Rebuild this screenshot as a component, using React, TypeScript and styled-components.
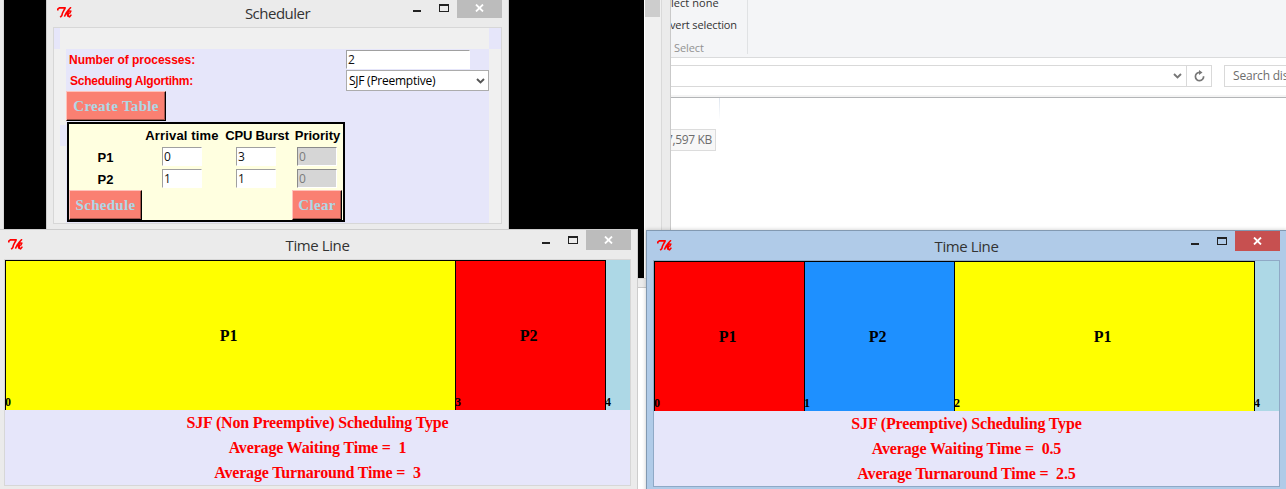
import React from "react";
import styled, { createGlobalStyle } from "styled-components";

const ui = `"Open Sans", "Noto Sans", sans-serif`;
const serif = `"Liberation Serif", "Times New Roman", serif`;
const sans = `"Liberation Sans", Arial, sans-serif`;

const GlobalStyle = createGlobalStyle`
  * { box-sizing: border-box; }
  body { margin: 0; background: #fff; overflow: hidden; }
`;

const Desktop = styled.div`
  position: relative;
  width: 1286px;
  height: 489px;
  overflow: hidden;
  background: #fff;
`;

/* ---------- Console window in the background ---------- */

const ConsoleWindow = styled.div`
  position: absolute;
  left: -4px;
  top: 0;
  width: 675px;
  height: 288px;
  display: flex;
  padding: 0 8px 8px 7px;
  background: #ebebeb;
  border: solid #c9c9c9;
  border-width: 0 1px 1px 0;
`;

const ConsoleBody = styled.div`
  flex: 1;
  display: flex;
  border: solid #d9d9d9;
  border-width: 0 1px 1px 1px;
`;

const ConsoleOutput = styled.div`
  flex: 1;
  background: #000;
`;

const ScrollTrack = styled.div`
  width: 17px;
  padding: 0 1px;
  background: #f0f0f0;
  border-left: 1px solid #fff;
`;

const ScrollThumb = styled.div`
  height: 17px;
  margin-left: -1px;
  background: #cdcdcd;
`;

/* ---------- File explorer in the background ---------- */

const Explorer = styled.div`
  position: absolute;
  left: 671px;
  top: 0;
  width: 615px;
  height: 230px;
  overflow: hidden;
  background: #fff;
  font-family: ${ui};
`;

const Ribbon = styled.div`
  height: 58px;
  background: #f4f5f7;
  border-bottom: 1px solid #dadbdc;
`;

const RibbonGroup = styled.div`
  width: 77px;
  height: 54px;
  overflow: hidden;
  border-right: 1px solid #e0e2e4;
`;

const RibbonItem = styled.div<{ $shift: number; $spacing: number }>`
  height: 22px;
  margin-left: ${(p) => p.$shift}px;
  font-size: 11px;
  line-height: 22px;
  letter-spacing: ${(p) => p.$spacing}px;
  white-space: nowrap;
  color: #333;
  &:first-child { margin-top: -8px; }
`;

const RibbonCaption = styled.div`
  margin: 1px 0 0 3px;
  font-size: 11px;
  line-height: 22px;
  letter-spacing: -0.1px;
  color: #929292;
`;

const AddressRow = styled.div`
  display: flex;
  height: 40px;
  padding-top: 7px;
  background: linear-gradient(#fff 37px, #f4f4f4 37px);
  border-bottom: 1px solid #b3b5b7;
`;

const AddressBox = styled.div`
  display: flex;
  align-items: center;
  justify-content: flex-end;
  width: 516px;
  height: 22px;
  padding-right: 4px;
  border: solid #d9d9d9;
  border-width: 1px 1px 1px 0;
`;

const RefreshBox = styled.div`
  display: flex;
  align-items: center;
  justify-content: center;
  width: 25px;
  height: 22px;
  border: solid #d9d9d9;
  border-width: 1px 1px 1px 0;
`;

const SearchBox = styled.div`
  flex: 1;
  height: 22px;
  margin-left: 12px;
  padding-left: 8px;
  overflow: hidden;
  border: solid #d9d9d9;
  border-width: 1px 0 1px 1px;
  color: #6d6d6d;
  font-size: 12px;
  line-height: 20px;
  letter-spacing: -0.2px;
  white-space: nowrap;
`;

const ColumnEdge = styled.div`
  width: 49px;
  height: 21px;
  border-right: 1px solid;
  border-image: linear-gradient(#dce4ee, #fff) 1;
`;

const SizeTip = styled.div`
  width: 45px;
  height: 22px;
  margin-top: 10px;
  overflow: hidden;
  display: flex;
  justify-content: flex-end;
  padding-right: 3px;
  background: #f7f7f7;
  border: solid #dcdcdc;
  border-width: 1px 1px 1px 0;
  color: #6d6d6d;
  font-size: 12px;
  line-height: 20px;
  letter-spacing: -0.35px;
  white-space: nowrap;
`;

/* ---------- Application windows ---------- */

type Frame = { $active?: boolean };

const WindowFrame = styled.section<Frame & { $x: number; $y: number; $w: number; $h: number }>`
  position: absolute;
  left: ${(p) => p.$x}px;
  top: ${(p) => p.$y}px;
  width: ${(p) => p.$w}px;
  height: ${(p) => p.$h}px;
  padding: 0 6px;
  background: ${(p) => (p.$active ? "#b0cbe8" : "#ebebeb")};
  border: 1px solid ${(p) => (p.$active ? "#8299b1" : "#cdcdcd")};
  box-shadow: ${(p) => (p.$active ? "0 0 4px rgba(0,0,0,.22)" : "none")};
`;

const TitleBar = styled.header`
  display: grid;
  grid-template-columns: 1fr auto 1fr;
  height: 29px;
`;

const TitleIcon = styled.div`
  padding: 9px 0 0 4px;
  line-height: 0;
`;

const Title = styled.h1<{ $spacing: number }>`
  margin: 0;
  font: 400 15px/30px ${ui};
  letter-spacing: ${(p) => p.$spacing}px;
  color: #333;
`;

const Controls = styled.div`
  display: flex;
  justify-content: flex-end;
  align-items: flex-start;
`;

const Glyph = styled.svg`
  display: block;
  width: 10px;
  height: 20px;
  margin-right: 8px;
  &:first-child { margin-right: 16px; }
`;

const CloseButton = styled.div<Frame>`
  display: flex;
  align-items: center;
  justify-content: center;
  width: 45px;
  height: 20px;
  background: ${(p) => (p.$active ? "#c75050" : "#bcbcbc")};
`;

const Client = styled.div<Frame>`
  border: 1px solid ${(p) => (p.$active ? "#8fa9c6" : "#d7d7d7")};
`;

const TkLogo = () => (
  <svg width="15" height="11" viewBox="0 0 15 11" fill="none" stroke="#f00">
    <path d="M.8 3.4V2.2L2.4.9h6.4M8.2 1L6.6 3.8 5.4 6.2 4.8 8.6 3.2 10.3" strokeWidth="1.6" />
    <path d="M14 .2L11.6 2.8 9.2 6 7.4 9.6M9.4 6.4L12.4 3.8 13.8 4.2 13 6 10.2 6.8 11 9.2 12.6 9.8 14.4 7.6" strokeWidth="1.5" />
    <path d="M9.6 6.2h2.6v3H10z" fill="#f00" stroke="none" />
  </svg>
);

type WindowProps = {
  title: string;
  spacing: number;
  x: number;
  y: number;
  w: number;
  h: number;
  active?: boolean;
  children: React.ReactNode;
};

const AppWindow = ({ title, spacing, x, y, w, h, active, children }: WindowProps) => (
  <WindowFrame $x={x} $y={y} $w={w} $h={h} $active={active}>
    <TitleBar>
      <TitleIcon><TkLogo /></TitleIcon>
      <Title $spacing={spacing}>{title}</Title>
      <Controls>
        <Glyph viewBox="0 0 10 20"><path d="M0 12h8v2H0z" fill="#222" /></Glyph>
        <Glyph viewBox="0 0 10 20"><path d="M0 6h10v8H0zM1 8v5h8V8z" fill="#222" fillRule="evenodd" /></Glyph>
        <CloseButton $active={active}>
          <svg width="9" height="8" viewBox="0 0 9 8"><path d="M1 .5l7 7M8 .5l-7 7" stroke="#fff" strokeWidth="1.8" /></svg>
        </CloseButton>
      </Controls>
    </TitleBar>
    <Client $active={active}>{children}</Client>
  </WindowFrame>
);

/* ---------- Scheduler form ---------- */

const FormHeader = styled.div`
  height: 21px;
  border: solid #e6e6fa;
  border-width: 0 12px 0 6px;
  background: #f0f0f0;
`;

const FormBody = styled.div`
  display: flex;
  height: 174px;
  background: #f0f0f0;
`;

const Gutter = styled.div`
  width: 12px;
  padding: 76px 0 0 6px;
`;

const GutterPatch = styled.div`
  height: 21px;
  background: #e6e6fa;
`;

const Form = styled.div`
  width: 423px;
  background: #e6e6fa;
`;

const FormRow = styled.div<{ $h: number }>`
  display: flex;
  justify-content: space-between;
  height: ${(p) => p.$h}px;
`;

const FormLabel = styled.label<{ $indent: number; $spacing: number }>`
  padding-left: ${(p) => p.$indent}px;
  font: 700 12px/23px ${sans};
  letter-spacing: ${(p) => p.$spacing}px;
  color: #f00;
`;

const Entry = styled.div<{ $w: number; $disabled?: boolean }>`
  width: ${(p) => p.$w}px;
  height: 19px;
  padding-left: 1px;
  background: ${(p) => (p.$disabled ? "#d6d6d6" : "#fff")};
  border: 1px solid;
  border-color: ${(p) => (p.$disabled ? "#8a8a8a #fff #fff #8a8a8a" : "#a0a0a0 #fff #fff #a0a0a0")};
  color: ${(p) => (p.$disabled ? "#7b7b7b" : "#111")};
  font: 12px/18px ${ui};
`;

const ProcessCount = styled(Entry)`
  margin: 1px 19px 0 0;
`;

const Combo = styled.div`
  display: flex;
  align-items: center;
  justify-content: space-between;
  width: 143px;
  height: 21px;
  padding: 0 3px 0 2px;
  background: #fff;
  border: 1px solid #acacac;
  color: #000;
  font: 12px/19px ${ui};
  letter-spacing: -0.25px;
`;

const RaisedButton = styled.button<{ $w: number }>`
  width: ${(p) => p.$w}px;
  height: 30px;
  padding: 0;
  border: 1px solid;
  border-color: #ffc3bb #000 #000 #ffc3bb;
  box-shadow: inset -1px -1px 0 #a4544b;
  background: #fa8072;
  color: #add8e6;
  font: 700 15px/28px ${serif};
  letter-spacing: 0.3px;
  white-space: nowrap;
`;

const ProcessTable = styled.div`
  display: grid;
  grid-template-columns: 73px 80px 70px 51px;
  grid-template-rows: 22px 22px 22px 30px;
  width: 278px;
  margin: 1px 0 0 1px;
  border: 2px solid #000;
  background: #ffffe0;
`;

const Cell = styled.div<{ $spacing?: number }>`
  display: flex;
  align-items: flex-start;
  justify-content: center;
  font: 700 13px/24px ${sans};
  letter-spacing: ${(p) => p.$spacing ?? 0}px;
  white-space: nowrap;
  color: #000;
`;

const EntryCell = styled.div<{ $indent: number }>`
  padding: 1px 0 0 ${(p) => p.$indent}px;
`;

const ClearCell = styled.div`
  grid-column: 4;
`;

/* ---------- Time line ---------- */

const Chart = styled.div`
  display: flex;
  height: 150px;
  background: #add8e6;
`;

const Slice = styled.div<{ $units: number; $color: string }>`
  display: grid;
  grid-template-rows: 1fr 15px;
  width: ${(p) => p.$units * 150}px;
  border: solid #000;
  border-width: 1px 0 0 1px;
  background: ${(p) => p.$color};
`;

const SliceName = styled.div`
  padding: 15px 4px 0 0;
  align-self: center;
  text-align: center;
  font: 700 16px/18px ${serif};
  letter-spacing: -0.2px;
`;

const Tick = styled.div`
  margin-left: -1px;
  font: 700 12px/14px ${serif};
`;

const ChartEnd = styled.div`
  display: flex;
  align-items: flex-end;
  padding-bottom: 1px;
  border-left: 1px solid #000;
`;

const Summary = styled.div`
  height: 75px;
  background: #e6e6fa;
  color: #f00;
  text-align: center;
  white-space: pre;
  font: 700 16px/25px ${serif};
  letter-spacing: -0.16px;
`;

type SliceData = { name: string; units: number; start: number; color: string };

const TimeLine = ({ slices, end, lines }: { slices: SliceData[]; end: number; lines: string[] }) => (
  <>
    <Chart>
      {slices.map((s) => (
        <Slice key={s.start} $units={s.units} $color={s.color}>
          <SliceName>{s.name}</SliceName>
          <Tick>{s.start}</Tick>
        </Slice>
      ))}
      <ChartEnd><Tick>{end}</Tick></ChartEnd>
    </Chart>
    <Summary>{lines.map((l) => <div key={l}>{l}</div>)}</Summary>
  </>
);

const Chevron = ({ color }: { color: string }) => (
  <svg width="9" height="6" viewBox="0 0 9 6" fill="none" stroke={color} strokeWidth="1.9">
    <path d="M1 1l3.5 3.5L8 1" />
  </svg>
);

const processes = [
  { name: "P1", arrival: 0, burst: 3 },
  { name: "P2", arrival: 1, burst: 1 },
];

export default function App() {
  return (
    <>
      <GlobalStyle />
      <Desktop>
        <ConsoleWindow>
          <ConsoleBody>
            <ConsoleOutput />
            <ScrollTrack><ScrollThumb /></ScrollTrack>
          </ConsoleBody>
        </ConsoleWindow>

        <Explorer>
          <Ribbon>
            <RibbonGroup>
              <RibbonItem $shift={0} $spacing={0.05}>lect none</RibbonItem>
              <RibbonItem $shift={-1} $spacing={-0.12}>vert selection</RibbonItem>
              <RibbonCaption>Select</RibbonCaption>
            </RibbonGroup>
          </Ribbon>
          <AddressRow>
            <AddressBox><Chevron color="#777" /></AddressBox>
            <RefreshBox>
              <svg width="11" height="12" viewBox="0 0 11 12">
                <path d="M9.6 6.2A4.1 4.1 0 1 1 5.5 2.4" fill="none" stroke="#777" strokeWidth="1.7" />
                <path d="M5 0v5l3.5-2.5z" fill="#777" />
              </svg>
            </RefreshBox>
            <SearchBox>Search dis</SearchBox>
          </AddressRow>
          <ColumnEdge />
          <SizeTip>7,597 KB</SizeTip>
        </Explorer>

        <AppWindow title="Scheduler" spacing={-0.5} x={46} y={-3} w={463} h={240}>
          <FormHeader />
          <FormBody>
            <Gutter><GutterPatch /></Gutter>
            <Form>
              <FormRow $h={21}>
                <FormLabel $indent={3} $spacing={-0.03}>Number of processes:</FormLabel>
                <ProcessCount $w={124}>2</ProcessCount>
              </FormRow>
              <FormRow $h={21}>
                <FormLabel $indent={4} $spacing={-0.25}>Scheduling Algortihm:</FormLabel>
                <Combo>SJF (Preemptive)<Chevron color="#555" /></Combo>
              </FormRow>
              <FormRow $h={30}>
                <RaisedButton $w={100}>Create Table</RaisedButton>
              </FormRow>
              <ProcessTable>
                <Cell />
                <Cell $spacing={0.15}>Arrival time</Cell>
                <Cell $spacing={-0.15}>CPU Burst</Cell>
                <Cell>Priority</Cell>
                {processes.map((p) => (
                  <React.Fragment key={p.name}>
                    <Cell>{p.name}</Cell>
                    <EntryCell $indent={20}><Entry $w={40}>{p.arrival}</Entry></EntryCell>
                    <EntryCell $indent={14}><Entry $w={40}>{p.burst}</Entry></EntryCell>
                    <EntryCell $indent={5}><Entry $w={40} $disabled>0</Entry></EntryCell>
                  </React.Fragment>
                ))}
                <RaisedButton $w={73}>Schedule</RaisedButton>
                <ClearCell><RaisedButton $w={50}>Clear</RaisedButton></ClearCell>
              </ProcessTable>
            </Form>
          </FormBody>
        </AppWindow>

        <AppWindow title="Time Line" spacing={-0.4} x={-3} y={229} w={641} h={264}>
          <TimeLine
            slices={[
              { name: "P1", units: 3, start: 0, color: "#ffff00" },
              { name: "P2", units: 1, start: 3, color: "#ff0000" },
            ]}
            end={4}
            lines={["SJF (Non Preemptive) Scheduling Type", "Average Waiting Time =  1", "Average Turnaround Time =  3"]}
          />
        </AppWindow>

        <AppWindow title="Time Line" spacing={-0.4} x={646} y={230} w={641} h={264} active>
          <TimeLine
            slices={[
              { name: "P1", units: 1, start: 0, color: "#ff0000" },
              { name: "P2", units: 1, start: 1, color: "#1e90ff" },
              { name: "P1", units: 2, start: 2, color: "#ffff00" },
            ]}
            end={4}
            lines={["SJF (Preemptive) Scheduling Type", "Average Waiting Time =  0.5", "Average Turnaround Time =  2.5"]}
          />
        </AppWindow>
      </Desktop>
    </>
  );
}
